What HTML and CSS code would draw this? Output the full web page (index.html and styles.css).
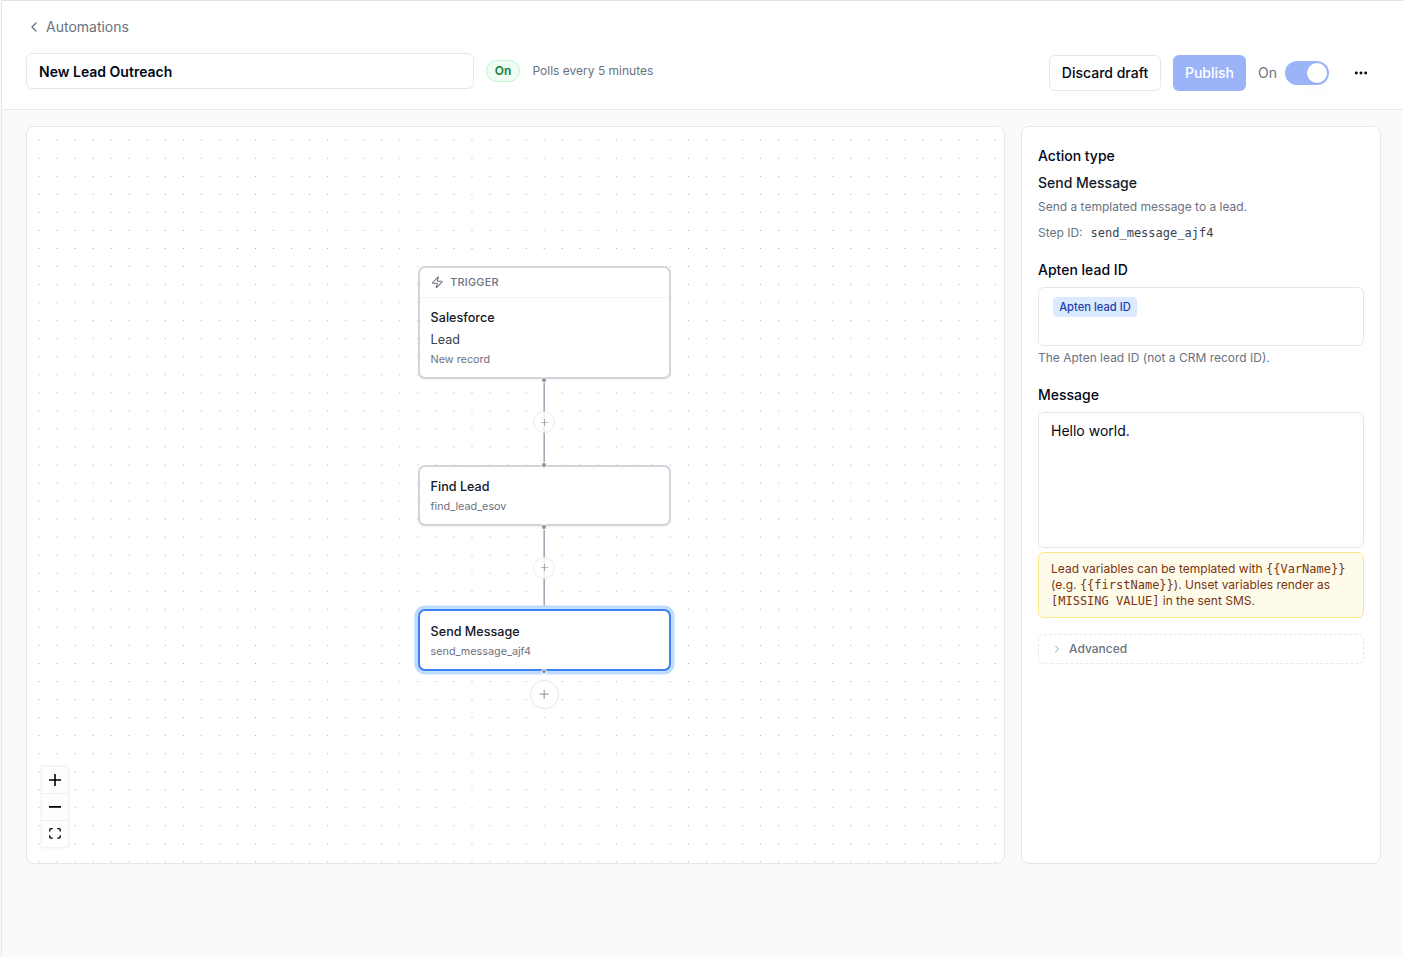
FILE: index.html
```html
<!DOCTYPE html>
<html lang="en">
<head>
    <meta charset="UTF-8">
    <meta name="viewport" content="width=device-width, initial-scale=1.0">
    <title>New Lead Outreach</title>
    <link rel="stylesheet" href="styles.css">
</head>
<body>
    <div class="page">
        <header class="header">
            <a class="back">
                <svg width="16" height="16" viewBox="0 0 24 24" fill="none" stroke="currentColor" stroke-width="2" stroke-linecap="round" stroke-linejoin="round"><path d="m15 18-6-6 6-6"/></svg>
                <span>Automations</span>
            </a>
            <div class="header-row">
                <div class="header-left">
                    <div class="name-input">New Lead Outreach</div>
                    <span class="badge">On</span>
                    <span class="polls">Polls every 5 minutes</span>
                </div>
                <div class="header-right">
                    <button class="btn btn-outline">Discard draft</button>
                    <button class="btn btn-primary">Publish</button>
                    <div class="toggle-group">
                        <span>On</span>
                        <div class="toggle"><div class="toggle-thumb"></div></div>
                    </div>
                    <button class="more">
                        <svg width="16" height="16" viewBox="0 0 24 24" fill="currentColor" stroke="currentColor" stroke-width="2"><circle cx="12" cy="12" r="1.2"/><circle cx="19" cy="12" r="1.2"/><circle cx="5" cy="12" r="1.2"/></svg>
                    </button>
                </div>
            </div>
        </header>

        <main class="content">
            <section class="canvas">
                <svg class="dots">
                    <pattern id="dot-pattern" x="11.55" y="12.8" width="18.04" height="18.04" patternUnits="userSpaceOnUse">
                        <circle cx="0.5" cy="0.5" r="0.5" fill="#91919a"/>
                    </pattern>
                    <rect width="100%" height="100%" fill="url(#dot-pattern)"/>
                </svg>
                <svg class="edges" fill="none" stroke="#9ca3af" stroke-width="1.5">
                    <path d="M517.2 253V338"/>
                    <path d="M517.2 400V482"/>
                </svg>

                <div class="node node-trigger">
                    <div class="node-head">
                        <svg width="12.6" height="12.6" viewBox="0 0 24 24" fill="none" stroke="currentColor" stroke-width="2" stroke-linecap="round" stroke-linejoin="round"><path d="M4 14a1 1 0 0 1-.78-1.63l9.9-10.2a.5.5 0 0 1 .86.46l-1.92 6.02A1 1 0 0 0 13 10h7a1 1 0 0 1 .78 1.63l-9.9 10.2a.5.5 0 0 1-.86-.46l1.92-6.02A1 1 0 0 0 11 14z"/></svg>
                        <span>TRIGGER</span>
                    </div>
                    <div class="node-body">
                        <div class="node-title">Salesforce</div>
                        <div class="node-object">Lead</div>
                        <div class="node-sub">New record</div>
                    </div>
                    <i class="handle handle-bottom"></i>
                </div>

                <div class="node node-find">
                    <i class="handle handle-top"></i>
                    <div class="node-body">
                        <div class="node-title">Find Lead</div>
                        <div class="node-sub">find_lead_esov</div>
                    </div>
                    <i class="handle handle-bottom"></i>
                </div>

                <div class="node node-send selected">
                    <div class="node-body">
                        <div class="node-title">Send Message</div>
                        <div class="node-sub">send_message_ajf4</div>
                    </div>
                    <i class="handle handle-bottom"></i>
                </div>

                <div class="add add-first">
                    <svg width="11" height="11" viewBox="0 0 24 24" fill="none" stroke="currentColor" stroke-width="2" stroke-linecap="round"><path d="M5 12h14M12 5v14"/></svg>
                </div>
                <div class="add add-second">
                    <svg width="11" height="11" viewBox="0 0 24 24" fill="none" stroke="currentColor" stroke-width="2" stroke-linecap="round"><path d="M5 12h14M12 5v14"/></svg>
                </div>
                <div class="add add-last">
                    <svg width="14.4" height="14.4" viewBox="0 0 24 24" fill="none" stroke="currentColor" stroke-width="2" stroke-linecap="round"><path d="M5 12h14M12 5v14"/></svg>
                </div>

                <div class="controls">
                    <button><svg width="12" height="12" viewBox="0 0 32 32"><path d="M32 18.133H18.133V32h-4.266V18.133H0v-4.266h13.867V0h4.266v13.867H32z"/></svg></button>
                    <button><svg width="12" height="2" viewBox="0 0 32 5"><path d="M0 0h32v4.2H0z"/></svg></button>
                    <button><svg width="12" height="11" viewBox="0 0 32 30"><path d="M3.692 4.63c0-.53.4-.938.939-.938h5.215V0H4.708C2.13 0 0 2.054 0 4.63v5.216h3.692V4.631zM27.354 0h-5.2v3.692h5.17c.53 0 .984.4.984.939v5.215H32V4.631A4.624 4.624 0 0027.354 0zm.954 24.83c0 .532-.4.94-.939.94h-5.215v3.768h5.215c2.577 0 4.631-2.13 4.631-4.707v-5.139h-3.692v5.139zm-23.677.94c-.531 0-.939-.4-.939-.94v-5.138H0v5.139c0 2.577 2.13 4.707 4.708 4.707h5.138V25.77H4.631z"/></svg></button>
                </div>
            </section>

            <aside class="panel">
                <h2 class="label">Action type</h2>
                <div class="action-name">Send Message</div>
                <p class="hint action-hint">Send a templated message to a lead.</p>
                <p class="hint step-id">Step ID: <code>send_message_ajf4</code></p>

                <h2 class="label">Apten lead ID</h2>
                <div class="field field-lead"><span class="chip">Apten lead ID</span></div>
                <p class="hint field-hint">The Apten lead ID (not a CRM record ID).</p>

                <h2 class="label">Message</h2>
                <div class="field field-message">Hello world.</div>
                <div class="notice">Lead variables can be templated with <code>{{VarName}}</code> (e.g. <code>{{firstName}}</code>). Unset variables render as <code>[MISSING VALUE]</code> in the sent SMS.</div>

                <div class="advanced">
                    <svg width="12" height="12" viewBox="0 0 24 24" fill="none" stroke="currentColor" stroke-width="2" stroke-linecap="round" stroke-linejoin="round"><path d="m9 18 6-6-6-6"/></svg>
                    <span>Advanced</span>
                </div>
            </aside>
        </main>
    </div>
</body>
</html>
```
FILE: styles.css
```css
* {
    box-sizing: border-box;
}
body {
    margin: 0;
    font-family: Inter, sans-serif;
    font-size: 14px;
    line-height: 20px;
    color: #020817;
    background-color: #f9fafb;
}
h2, p {
    margin: 0;
}
button {
    font: inherit;
    color: inherit;
    cursor: pointer;
}
svg {
    display: block;
    flex-shrink: 0;
}
code {
    font-family: "DejaVu Sans Mono", monospace;
    font-size: 12px;
}
.page {
    height: 957px;
    overflow: hidden;
    margin-left: 1px;
    border-top: 1px solid #dbe5e2;
    border-left: 1px solid #e5e7eb;
    background-color: #f8fafc;
}

/* Header */
.header {
    height: 109px;
    padding: 16px 22px 0 24px;
    background-color: #fff;
    border-bottom: 1px solid #e5e7eb;
}
.back {
    display: flex;
    align-items: center;
    gap: 4px;
    color: #6b7280;
}
.header-row {
    display: flex;
    justify-content: space-between;
    margin-top: 16px;
}
.header-left {
    display: flex;
    align-items: center;
    height: 36px;
}
.name-input {
    width: 448px;
    height: 36px;
    padding: 8px 12px;
    font-weight: 600;
    border: 1px solid #e2e8f0;
    border-radius: 6px;
}
.badge {
    width: 34px;
    height: 22px;
    margin-left: 12px;
    padding: 2px 0;
    text-align: center;
    font-size: 12px;
    line-height: 16px;
    font-weight: 600;
    color: #15803d;
    background-color: #f0fdf4;
    border: 1px solid #bbf7d0;
    border-radius: 11px;
}
.polls {
    margin-left: 12.5px;
    font-size: 12px;
    color: #6b7280;
}
.header-right {
    display: flex;
    align-items: center;
    gap: 12px;
    height: 36px;
    margin-top: 2px;
}
.btn {
    height: 36px;
    padding: 0;
    font-weight: 500;
    white-space: nowrap;
    border: 0;
    border-radius: 6px;
}
.btn-outline {
    width: 112px;
    background-color: #fff;
    border: 1px solid #e2e8f0;
}
.btn-primary {
    width: 73px;
    color: #fff;
    background-color: #9bb4f8;
}
.toggle-group {
    display: flex;
    align-items: center;
    gap: 8px;
    color: #6b7280;
}
.toggle {
    width: 44px;
    height: 24px;
    padding: 2px;
    border-radius: 12px;
    background-color: #9bb4f8;
}
.toggle-thumb {
    width: 20px;
    height: 20px;
    margin-left: 20px;
    border-radius: 50%;
    background-color: #fff;
    box-shadow: 0 10px 15px -3px rgba(0, 0, 0, 0.04);
}
.more {
    display: flex;
    align-items: center;
    justify-content: center;
    width: 40px;
    height: 36px;
    padding: 0;
    border: 0;
    background: none;
}

/* Layout */
.content {
    display: grid;
    grid-template-columns: 979px 360px;
    gap: 16px;
    height: 738px;
    margin: 16px 0 0 24px;
}
.canvas,
.panel {
    background-color: #fff;
    border: 1px solid #e5e7eb;
    border-radius: 8px;
}

/* Flow canvas */
.canvas {
    position: relative;
    overflow: hidden;
}
.dots,
.edges {
    position: absolute;
    top: 0;
    left: 0;
    width: 100%;
    height: 100%;
}
.node {
    position: absolute;
    left: 391px;
    width: 252.6px;
    background-color: #fff;
    border: 2px solid #d1d5db;
    border-radius: 7px;
    box-shadow: 0 1px 2px rgba(0, 0, 0, 0.05);
}
.node-trigger {
    top: 139px;
    height: 113px;
}
.node-find {
    top: 338px;
    height: 61px;
}
.node-send {
    top: 482.4px;
    height: 61.4px;
}
.node.selected {
    border-color: #3b82f6;
    box-shadow: 0 0 0 3.6px #bfdbfe;
}
.node-head {
    display: flex;
    align-items: center;
    gap: 7px;
    height: 30px;
    padding: 0 10.6px;
    font-size: 10.8px;
    font-weight: 500;
    letter-spacing: 0.27px;
    color: #6b7280;
    border-bottom: 1px solid #f3f4f6;
}
.node-body {
    padding: 10.8px 10.6px;
}
.node-title {
    font-size: 12.6px;
    line-height: 18px;
    font-weight: 500;
    color: #111827;
}
.node-send .node-title {
    margin-top: 0.6px;
}
.node-object {
    margin-top: 4px;
    font-size: 12.6px;
    line-height: 18px;
    color: #374151;
}
.node-sub {
    margin-top: 4px;
    font-size: 10.8px;
    line-height: 14.4px;
    color: #6b7280;
}
.handle {
    position: absolute;
    left: 50%;
    width: 5.6px;
    height: 5.6px;
    margin-left: -2.9px;
    border: 1px solid #fff;
    border-radius: 50%;
    background-color: #94979f;
}
.handle-top {
    top: -5px;
}
.handle-bottom {
    bottom: -5.5px;
}
.add {
    position: absolute;
    display: flex;
    align-items: center;
    justify-content: center;
    width: 22px;
    height: 22px;
    left: 506px;
    color: #9ca3af;
    background-color: #fff;
    border: 1px solid #e5e7eb;
    border-radius: 50%;
}
/* buttons on an edge stay slightly see-through */
.add-first,
.add-second {
    opacity: 0.8;
}
.add-first {
    top: 284px;
}
.add-second {
    top: 429.6px;
}
.add-last {
    top: 552.5px;
    left: 502.5px;
    width: 29px;
    height: 29px;
}
.controls {
    position: absolute;
    left: 15px;
    bottom: 16px;
    display: flex;
    flex-direction: column;
    width: 26px;
    box-shadow: 0 0 2px 1px rgba(0, 0, 0, 0.08);
}
.controls button {
    display: flex;
    align-items: center;
    justify-content: center;
    width: 26px;
    height: 27px;
    padding: 0;
    background-color: #fefefe;
    border: 0;
    border-bottom: 1px solid #eee;
}
.controls button:last-child {
    height: 26px;
    padding-bottom: 1px;
    border-bottom: 0;
}

/* Side panel */
.panel {
    padding: 19px 16px 0;
}
.label {
    font-size: 14px;
    line-height: 20px;
    font-weight: 500;
}
.action-name {
    margin-top: 7px;
    font-weight: 500;
    color: #111827;
}
.hint {
    font-size: 12px;
    line-height: 16px;
    color: #6b7280;
}
.action-hint {
    margin-top: 6px;
}
.step-id {
    margin: 10px 0 19px;
}
.step-id code {
    margin-left: 4.6px;
    color: #374151;
}
.field {
    border: 1px solid #e5e7eb;
    border-radius: 6px;
}
.field-lead {
    display: flex;
    align-items: flex-start;
    height: 59px;
    margin-top: 7px;
    padding: 9px 14px;
}
.chip {
    width: 84px;
    padding: 2px 0;
    text-align: center;
    font-size: 11.2px;
    line-height: 16px;
    font-weight: 500;
    color: #1e40af;
    background-color: #dbeafe;
    border-radius: 4px;
}
.field-hint {
    margin: 4px 0 19px;
}
.field-message {
    height: 136px;
    margin-top: 7px;
    padding: 8px 12px;
}
.notice {
    height: 66px;
    margin-top: 4px;
    padding: 8px 12px;
    font-size: 12px;
    line-height: 16px;
    color: #78350f;
    background-color: #fffbeb;
    border: 1px solid #fde68a;
    border-radius: 6px;
}
.advanced {
    display: flex;
    align-items: center;
    gap: 6px;
    height: 30px;
    margin-top: 16px;
    padding: 0 12px;
    font-size: 12px;
    font-weight: 500;
    color: #6b7280;
    border: 1px dashed #e5e7eb;
    border-radius: 6px;
}
.advanced svg {
    color: #9ca3af;
}
```
